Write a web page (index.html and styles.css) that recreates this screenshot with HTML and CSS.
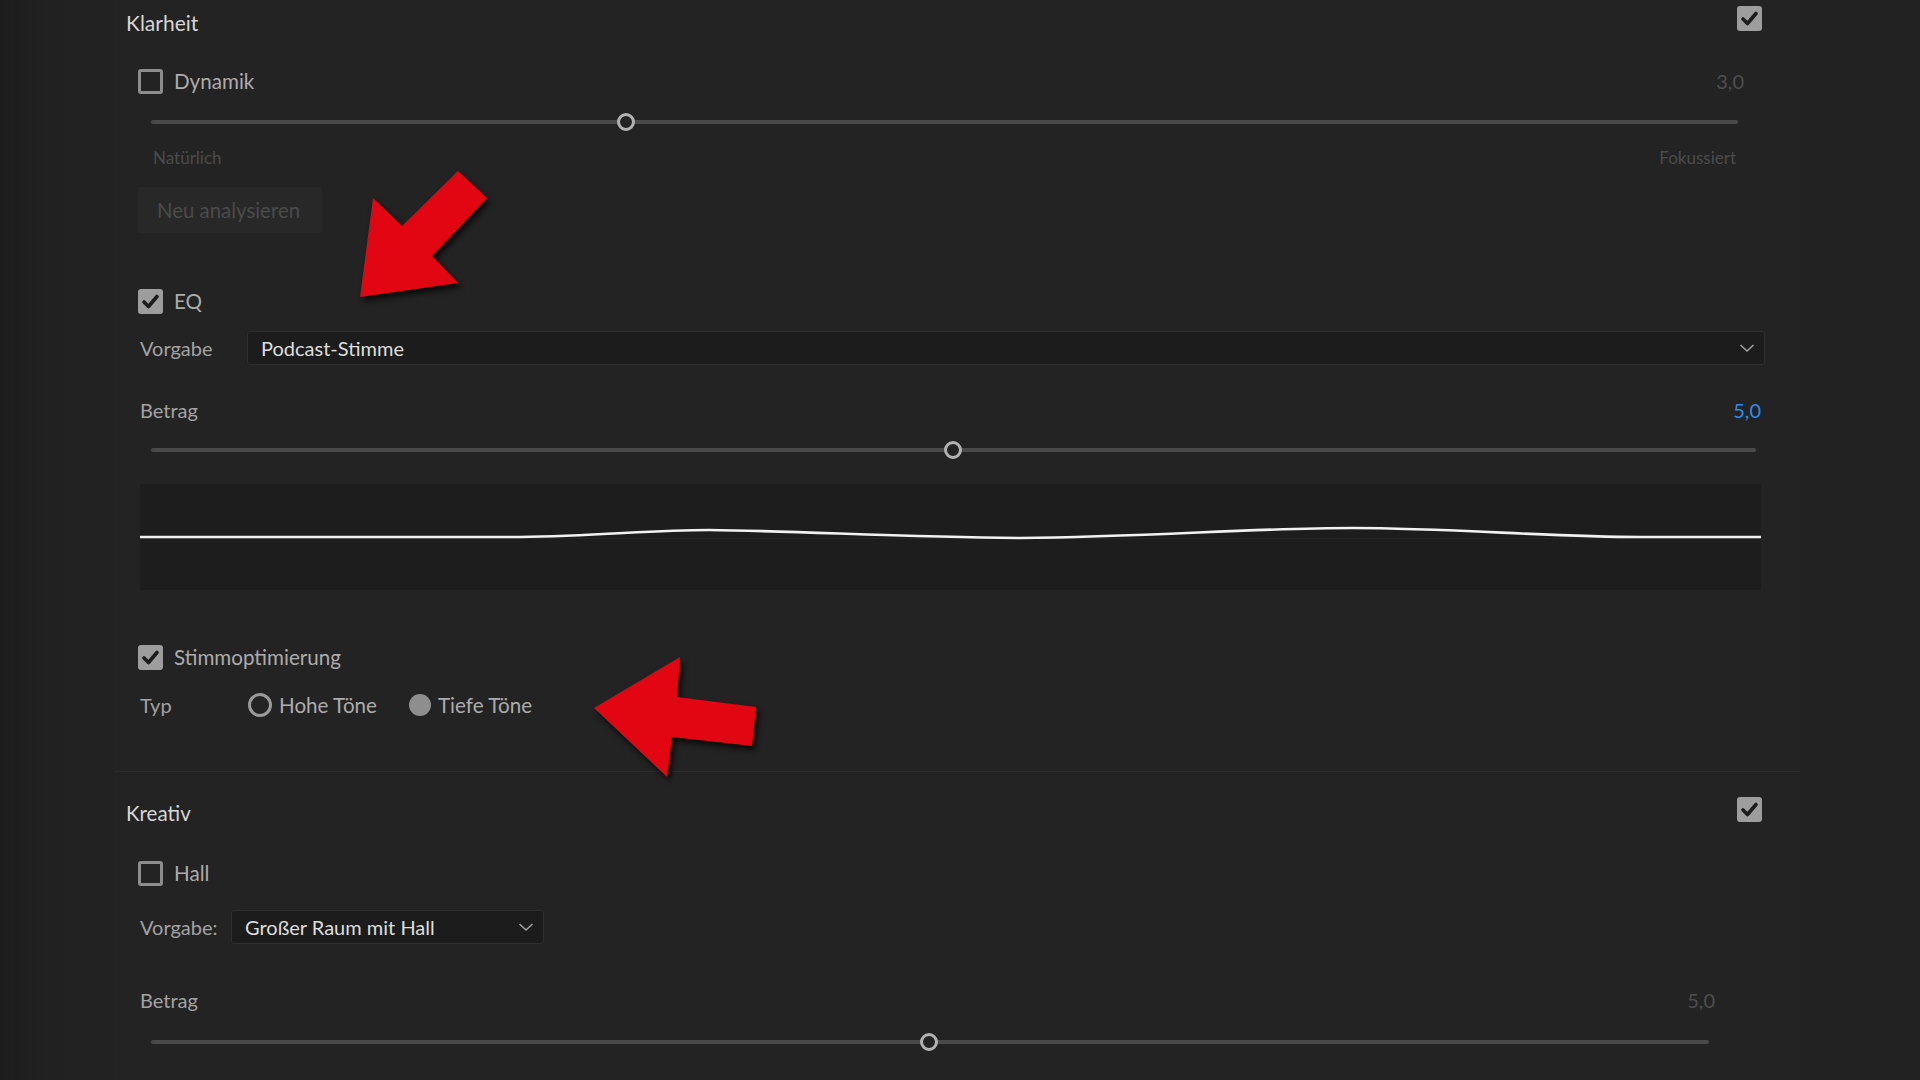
FILE: index.html
```html
<!DOCTYPE html>
<html lang="de">
<head>
<meta charset="utf-8">
<title>Essential Sound</title>
<link rel="stylesheet" href="styles.css">
</head>
<body>
<div class="page">
  <div class="panel">
    <section class="section klarheit">
      <div class="sec-head">
        <span class="sec-title">Klarheit</span>
        <span class="cb checked"><svg viewBox="0 0 25 25"><path d="M6 13 L10.5 17.5 L19 7.5"/></svg></span>
      </div>
      <div class="sec-body">
        <div class="vrow dyn-row">
          <label class="cbl"><span class="cb"></span><span class="cb-text">Dynamik</span></label>
          <span class="val dim">3,0</span>
        </div>
        <div class="slider s1"><div class="track"></div><div class="thumb" style="left:475px"></div></div>
        <div class="scale"><span>Natürlich</span><span>Fokussiert</span></div>
        <div class="btn">Neu analysieren</div>

        <div class="row eq-row">
          <label class="cbl"><span class="cb checked"><svg viewBox="0 0 25 25"><path d="M6 13 L10.5 17.5 L19 7.5"/></svg></span><span class="cb-text">EQ</span></label>
        </div>
        <div class="row preset p1">
          <span class="lbl">Vorgabe</span>
          <div class="dd"><span>Podcast-Stimme</span><svg class="chev" viewBox="0 0 16 10"><path d="M1.5 2 L8 8 L14.5 2"/></svg></div>
        </div>
        <div class="vrow bet1">
          <span class="lbl">Betrag</span>
          <span class="val blue">5,0</span>
        </div>
        <div class="slider s2"><div class="track"></div><div class="thumb" style="left:802px"></div></div>
        <div class="graph">
          <svg viewBox="0 0 1621 106" preserveAspectRatio="none">
            <line x1="0" y1="54.5" x2="1621" y2="54.5" class="zero"/>
            <path d="M0,53 L380,53 C460,52 510,46 569,46 C660,47 760,53 880,54 C1010,53 1110,44 1213,44 C1310,44 1410,53 1500,53 L1621,53"/>
          </svg>
        </div>

        <div class="row stimm-row">
          <label class="cbl"><span class="cb checked"><svg viewBox="0 0 25 25"><path d="M6 13 L10.5 17.5 L19 7.5"/></svg></span><span class="cb-text">Stimmoptimierung</span></label>
        </div>
        <div class="row typ-row">
          <span class="lbl typ-lbl">Typ</span>
          <label class="radio"><span class="rb"></span><span class="cb-text">Hohe Töne</span></label>
          <label class="radio"><span class="rb on"></span><span class="cb-text">Tiefe Töne</span></label>
        </div>
      </div>
    </section>

    <section class="section kreativ">
      <div class="sec-head">
        <span class="sec-title">Kreativ</span>
        <span class="cb checked"><svg viewBox="0 0 25 25"><path d="M6 13 L10.5 17.5 L19 7.5"/></svg></span>
      </div>
      <div class="sec-body">
        <div class="row hall-row">
          <label class="cbl"><span class="cb"></span><span class="cb-text">Hall</span></label>
        </div>
        <div class="row preset p2">
          <span class="lbl">Vorgabe:</span>
          <div class="dd"><span>Großer Raum mit Hall</span><svg class="chev" viewBox="0 0 16 10"><path d="M1.5 2 L8 8 L14.5 2"/></svg></div>
        </div>
        <div class="vrow bet2">
          <span class="lbl">Betrag</span>
          <span class="val dim">5,0</span>
        </div>
        <div class="slider s3"><div class="track"></div><div class="thumb" style="left:778px"></div></div>
      </div>
    </section>
  </div>

  <svg class="arrows" viewBox="0 0 1920 1080">
    <polygon points="360,297 373,198 402,226 458,171 487,198 432,256 458,283"/>
    <polygon points="594,708 680,657 677,697 756,707 752,746 672,737 667,777"/>
  </svg>
</div>
</body>
</html>
```

FILE: styles.css
```css
* { box-sizing: border-box; }

html, body {
  margin: 0;
  padding: 0;
}

body {
  width: 1920px;
  height: 1080px;
  overflow: hidden;
  background: linear-gradient(to right, #1d1d1d 0px, #212121 45px, #222222 100px);
  font-family: Lato, "Open Sans", sans-serif;
  color: #b0b0b0;
}

.page {
  position: relative;
  width: 1920px;
  height: 1080px;
}

.panel {
  margin-left: 114px;
  width: 1686px;
  background: #232323;
  min-height: 1080px;
}

.section.klarheit {
  border-bottom: 1px solid #2d2d2d;
  padding-bottom: 49px;
}

.sec-head {
  height: 44px;
  display: flex;
  justify-content: space-between;
  align-items: center;
  padding-left: 12px;
  padding-right: 38px;
}

.kreativ .sec-head { margin-top: 19px; }

.sec-title {
  font-size: 21px;
  color: #d6d6d6;
}

.kreativ .sec-title { font-size: 20.5px; }

.sec-head .cb { margin-top: -7px; }

.sec-body {
  padding-left: 24px;
}

.row, .vrow {
  height: 34px;
  display: flex;
  align-items: center;
}

.vrow { justify-content: space-between; }

.cbl, .radio {
  display: flex;
  align-items: center;
}

.cb {
  width: 25px;
  height: 25px;
  border: 3px solid #8d8d8d;
  border-radius: 3px;
  flex: none;
  display: block;
}

.cb.checked {
  background: #9d9d9d;
  border: none;
}

.cb svg {
  width: 25px;
  height: 25px;
  display: block;
}

.cb svg path {
  fill: none;
  stroke: #1c1c1c;
  stroke-width: 3.6;
  stroke-linecap: round;
  stroke-linejoin: round;
}

.cb-text {
  font-size: 20.6px;
  color: #acacac;
  margin-left: 11px;
}

.lbl {
  font-size: 20px;
  color: #a2a2a2;
  padding-left: 2px;
}

.val { font-size: 20px; }
.val.dim { color: #4e4e4e; }
.val.blue { color: #2f8ce8; }

.dyn-row { margin-top: 20px; width: 1606px; }

.slider {
  position: relative;
  height: 28px;
  margin-left: 13px;
}

.slider .track {
  position: absolute;
  left: 0;
  right: 0;
  top: 12px;
  height: 4px;
  background: #4a4a4a;
  border-radius: 2px;
}

.slider .thumb {
  position: absolute;
  top: 5px;
  width: 18px;
  height: 18px;
  margin-left: -9px;
  border-radius: 50%;
  border: 3px solid #b2b2b2;
  background: #232323;
}

.s1 { width: 1587px; margin-top: 10px; }
.s2 { width: 1605px; margin-top: 9px; }
.s3 { width: 1558px; margin-top: 11px; }

.scale {
  margin-top: 10px;
  margin-left: 15px;
  width: 1583px;
  height: 22px;
  display: flex;
  justify-content: space-between;
  align-items: center;
  font-size: 17px;
  color: #4b4b4b;
}

.btn {
  margin-top: 19px;
  width: 184px;
  height: 46px;
  background: #282828;
  border-radius: 2px;
  color: #4b4b4b;
  font-size: 20.4px;
  display: flex;
  align-items: center;
  padding-left: 19px;
}

.eq-row { margin-top: 51px; }

.preset .lbl { flex: none; }

.p1 { margin-top: 13px; }
.p1 .lbl { width: 109px; }
.p1 .dd { width: 1518px; }

.p2 { margin-top: 20px; }
.p2 .lbl { width: 93px; }
.p2 .dd { width: 313px; }

.dd {
  height: 34px;
  background: #1c1c1c;
  border: 1px solid #2f2f2f;
  border-radius: 3px;
  display: flex;
  align-items: center;
  justify-content: space-between;
  padding-left: 13px;
  padding-right: 9px;
  font-size: 20px;
  color: #dedede;
}

.chev {
  width: 16px;
  height: 10px;
}

.chev path {
  fill: none;
  stroke: #a0a0a0;
  stroke-width: 1.6;
}

.bet1 { margin-top: 28px; width: 1623px; }

.graph {
  margin-top: 20px;
  margin-left: 2px;
  width: 1621px;
  height: 106px;
  background: #1d1d1d;
}

.graph svg {
  width: 1621px;
  height: 106px;
  display: block;
}

.graph path {
  fill: none;
  stroke: #f2f2f2;
  stroke-width: 2.6;
}

.graph .zero {
  stroke: #262626;
  stroke-width: 1;
}

.stimm-row { margin-top: 50px; }

.typ-row { margin-top: 14px; }

.typ-lbl { width: 110px; flex: none; }

.rb {
  width: 24px;
  height: 24px;
  border-radius: 50%;
  border: 3px solid #9a9a9a;
  flex: none;
  display: block;
}

.rb.on {
  width: 22px;
  height: 22px;
  border: none;
  background: #8e8e8e;
  margin-left: 32px;
}

.radio .cb-text { margin-left: 7px; }

.hall-row { margin-top: 21px; }

.bet2 { margin-top: 39px; width: 1577px; }

.arrows {
  position: absolute;
  left: 0;
  top: 0;
  width: 1920px;
  height: 1080px;
  pointer-events: none;
  filter: drop-shadow(3px 4px 3px rgba(0, 0, 0, 0.75));
}

.arrows polygon {
  fill: #e20613;
}
```
